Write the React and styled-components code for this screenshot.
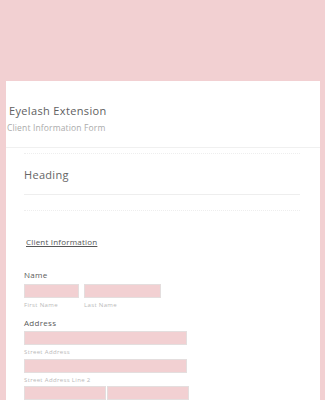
import React from "react";
import styled, { createGlobalStyle } from "styled-components";

const Global = createGlobalStyle`
  html, body { margin: 0; padding: 0; }
  body {
    background: #f2d0d2;
    font-family: "Open Sans", "Liberation Sans", sans-serif;
    overflow: hidden;
  }
`;

const Page = styled.div`
  padding: 81px 5px 0 6px;
`;

const Card = styled.div`
  background: #ffffff;
  min-height: 400px;
`;

const Header = styled.div`
  padding: 22px 0 0 0;
  height: 44px;
  border-bottom: 1px solid #f0f0f0;
`;

const Title = styled.div`
  font-size: 11px;
  line-height: 16px;
  letter-spacing: 0.35px;
  color: #606060;
  padding-left: 3px;
`;

const Subtitle = styled.div`
  font-size: 8.5px;
  line-height: 12px;
  letter-spacing: 0.15px;
  color: #ababab;
  margin-top: 3px;
  padding-left: 1px;
`;

const Body = styled.div`
  padding: 5px 20px 0 18px;
`;

const Divider = styled.div`
  border-top: 1px ${(p) => p.$kind || "dotted"} #eeeeee;
  margin-top: ${(p) => p.$mt || 0}px;
`;

const Heading = styled.div`
  font-size: 11px;
  line-height: 14px;
  letter-spacing: 0.3px;
  color: #666666;
  margin-top: 14px;
`;

const SectionLink = styled.div`
  font-size: 8px;
  line-height: 10px;
  color: #555;
  letter-spacing: 0.2px;
  text-decoration: underline;
  margin: 26px 0 0 2px;
`;

const Label = styled.div`
  font-size: 8px;
  line-height: 10px;
  color: #5a5a5a;
  letter-spacing: 0.3px;
  margin-top: ${(p) => p.$mt}px;
`;

const Row = styled.div`
  display: flex;
  gap: ${(p) => p.$gap ?? 5}px;
  margin-top: ${(p) => p.$mt ?? 4}px;
`;

const Field = styled.div`
  display: flex;
  flex-direction: column;
`;

const Input = styled.div`
  width: ${(p) => p.$w}px;
  height: 12px;
  background: #f2d0d2;
  border: 1px solid #e4dede;
`;

const Sub = styled.div`
  font-size: 6px;
  line-height: 8px;
  color: #b9b9b9;
  margin-top: 3px;
  letter-spacing: 0.35px;
`;

export default function App() {
  return (
    <>
      <Global />
      <Page>
        <Card>
          <Header>
            <Title>Eyelash Extension</Title>
            <Subtitle>Client Information Form</Subtitle>
          </Header>
          <Body>
            <Divider />
            <Heading>Heading</Heading>
            <Divider $kind="solid" $mt={12} />
            <Divider $mt={15} />
            <SectionLink>Client Information</SectionLink>
            <Label $mt={23}>Name</Label>
            <Row $mt={4}>
              <Field>
                <Input $w={53} />
                <Sub>First Name</Sub>
              </Field>
              <Field>
                <Input $w={75} />
                <Sub>Last Name</Sub>
              </Field>
            </Row>
            <Label $mt={9}>Address</Label>
            <Row $mt={3}>
              <Field>
                <Input $w={161} />
                <Sub>Street Address</Sub>
              </Field>
            </Row>
            <Row $mt={3}>
              <Field>
                <Input $w={161} />
                <Sub>Street Address Line 2</Sub>
              </Field>
            </Row>
            <Row $mt={2} $gap={1}>
              <Input $w={80} />
              <Input $w={80} />
            </Row>
          </Body>
        </Card>
      </Page>
    </>
  );
}
